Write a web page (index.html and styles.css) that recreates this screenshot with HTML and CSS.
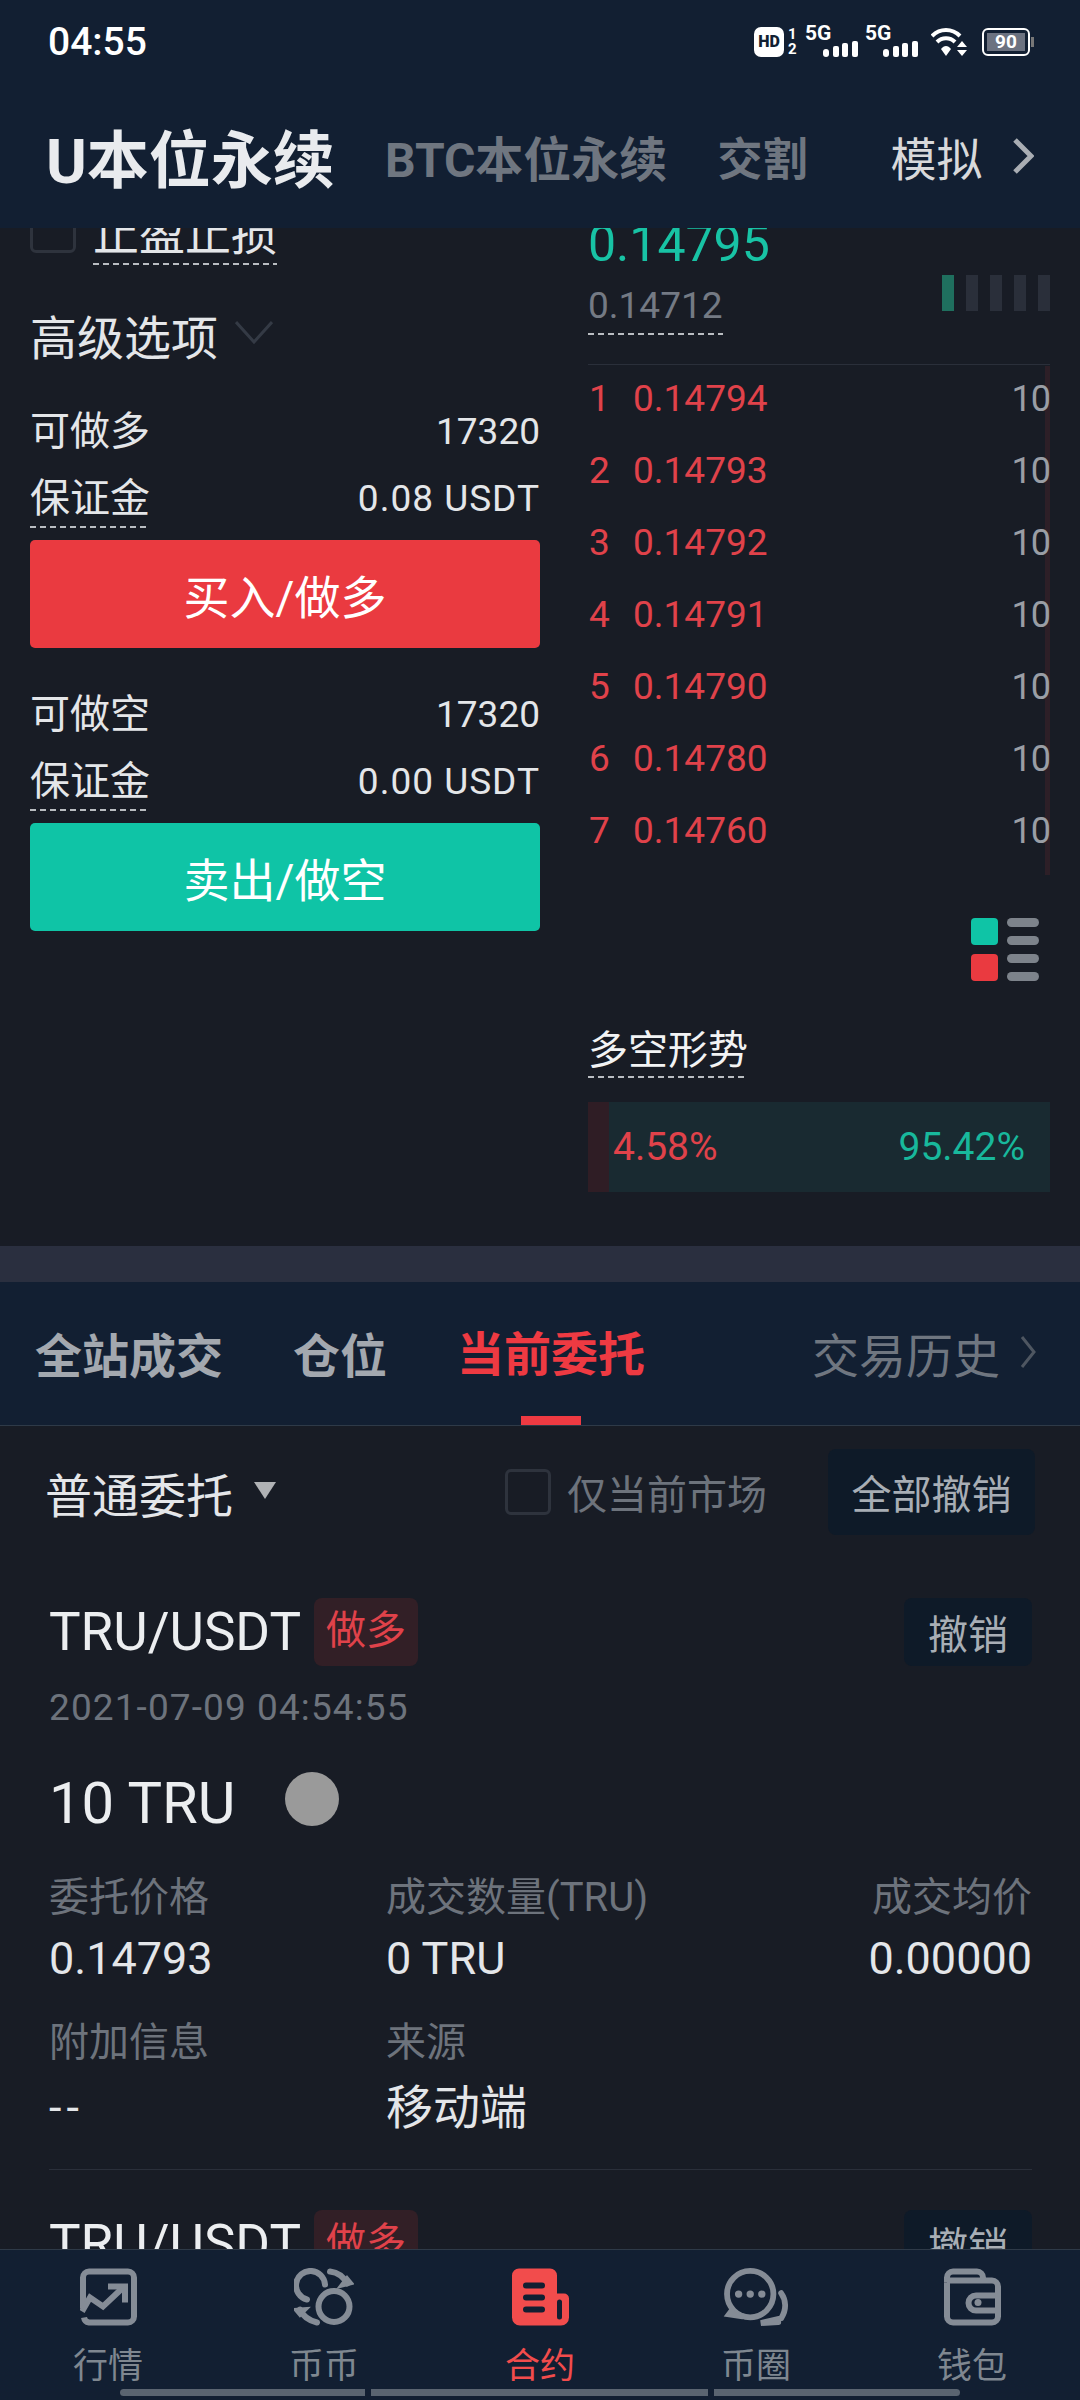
FILE: index.html
```html
<!DOCTYPE html>
<html lang="zh-CN">

<head>
    <meta charset="UTF-8">
    <meta name="viewport" content="width=device-width, initial-scale=1.0">
    <title>U本位永续</title>
    <link rel="stylesheet" href="styles.css">
</head>

<body>
    <header class="top">
        <div class="status">
            <span class="time">04:55</span>
            <div class="status-icons">
                <span class="hd">HD</span>
                <span class="sims"><i>1</i><i>2</i></span>
                <span class="net">
                    <b>5G</b>
                    <svg width="35" height="16" viewBox="0 0 35 16"><rect x="0" y="8" width="6" height="8" rx="3" /><rect x="10" y="5" width="6" height="11" rx="2" /><rect x="19" y="2" width="6" height="14" rx="2" /><rect x="29" y="0" width="6" height="16" rx="2" /></svg>
                </span>
                <span class="net net-2">
                    <b>5G</b>
                    <svg width="35" height="16" viewBox="0 0 35 16"><rect x="0" y="8" width="6" height="8" rx="3" /><rect x="10" y="5" width="6" height="11" rx="2" /><rect x="19" y="2" width="6" height="14" rx="2" /><rect x="29" y="0" width="6" height="16" rx="2" /></svg>
                </span>
                <svg class="wifi" width="36" height="30" viewBox="0 0 36 30">
                    <path d="M1 9 C9 1 21 1 29 9" fill="none" stroke="#fff" stroke-width="4" />
                    <path d="M6 15 C11 10 19 10 24 15" fill="none" stroke="#fff" stroke-width="4" />
                    <path d="M10 22 C13 18 17 18 20 22 L15 29 Z" fill="#fff" />
                    <path d="M31 14 L36 20 H26 Z M26 23 H36 L31 29 Z" fill="#fff" />
                </svg>
                <span class="battery"><span class="battery-level">90</span></span>
            </div>
        </div>
        <nav class="market-tabs">
            <span class="market-main">U本位永续</span>
            <span class="market-sub">BTC本位永续</span>
            <span class="market-sub market-jiaoge">交割</span>
            <span class="market-demo">模拟</span>
            <svg class="market-more" width="22" height="36" viewBox="0 0 22 36"><path d="M3 2 L19 18 L3 34" fill="none" stroke="#a9adb3" stroke-width="5" /></svg>
        </nav>
    </header>

    <main class="scroll">
        <div class="scroll-inner">
            <section class="trade">
                <div class="trade-form">
                    <div class="tp-row">
                        <span class="check"></span>
                        <span class="dash tp-label">止盈止损</span>
                    </div>
                    <div class="adv-row">
                        <span>高级选项</span>
                        <svg width="38" height="24" viewBox="0 0 38 24"><path d="M1 2 L19 22 L37 2" fill="none" stroke="#343a45" stroke-width="3" /></svg>
                    </div>

                    <div class="info-row info-first"><span>可做多</span><span class="num">17320</span></div>
                    <div class="info-row info-margin"><span class="dash">保证金</span><span class="num num-usdt">0.08 USDT</span></div>
                    <button class="trade-btn btn-buy">买入/做多</button>

                    <div class="info-row info-first info-second"><span>可做空</span><span class="num">17320</span></div>
                    <div class="info-row info-margin"><span class="dash">保证金</span><span class="num num-usdt">0.00 USDT</span></div>
                    <button class="trade-btn btn-sell">卖出/做空</button>
                </div>

                <div class="depth">
                    <div class="last-price">0.14795</div>
                    <div class="mark-row">
                        <span class="dash mark-price">0.14712</span>
                        <div class="signal">
                            <i class="on"></i><i></i><i></i><i></i><i></i>
                        </div>
                    </div>
                    <div class="book">
                        <div class="book-bar"></div>
                        <div class="book-row"><span class="book-idx">1</span><span>0.14794</span><span class="book-qty">10</span></div>
                        <div class="book-row"><span class="book-idx">2</span><span>0.14793</span><span class="book-qty">10</span></div>
                        <div class="book-row"><span class="book-idx">3</span><span>0.14792</span><span class="book-qty">10</span></div>
                        <div class="book-row"><span class="book-idx">4</span><span>0.14791</span><span class="book-qty">10</span></div>
                        <div class="book-row"><span class="book-idx">5</span><span>0.14790</span><span class="book-qty">10</span></div>
                        <div class="book-row"><span class="book-idx">6</span><span>0.14780</span><span class="book-qty">10</span></div>
                        <div class="book-row"><span class="book-idx">7</span><span>0.14760</span><span class="book-qty">10</span></div>
                    </div>
                    <svg class="book-mode" width="68" height="63" viewBox="0 0 68 63">
                        <rect x="0" y="0" width="27" height="27" rx="4" fill="#0fc4a6" />
                        <rect x="0" y="36" width="27" height="27" rx="4" fill="#ea3a40" />
                        <rect x="36" y="0" width="32" height="9" rx="4.5" fill="#7d838b" />
                        <rect x="36" y="18" width="32" height="9" rx="4.5" fill="#7d838b" />
                        <rect x="36" y="36" width="32" height="9" rx="4.5" fill="#7d838b" />
                        <rect x="36" y="54" width="32" height="9" rx="4.5" fill="#7d838b" />
                    </svg>
                    <div class="trend-title"><span class="dash">多空形势</span></div>
                    <div class="trend-bar">
                        <div class="trend-long"></div>
                        <span class="trend-red">4.58%</span>
                        <span class="trend-green">95.42%</span>
                    </div>
                </div>
            </section>

            <div class="sep"></div>

            <div class="order-tabs">
                <span class="otab">全站成交</span>
                <span class="otab">仓位</span>
                <span class="otab otab-active">当前委托</span>
                <span class="otab-history">交易历史</span>
                <svg width="16" height="34" viewBox="0 0 16 34"><path d="M2 2 L14 17 L2 32" fill="none" stroke="#4e5661" stroke-width="3" /></svg>
            </div>

            <div class="filter">
                <span class="filter-type">普通委托</span>
                <span class="filter-arrow"></span>
                <span class="check check-market"></span>
                <span class="filter-market">仅当前市场</span>
                <span class="dark-btn cancel-all">全部撤销</span>
            </div>

            <article class="order">
                <div class="order-head">
                    <span class="pair">TRU/USDT</span>
                    <span class="side">做多</span>
                    <span class="dark-btn cancel">撤销</span>
                </div>
                <div class="order-date">2021-07-09 04:54:55</div>
                <div class="order-size"><span>10 TRU</span><i class="dot"></i></div>
                <div class="order-grid">
                    <div>
                        <div class="lbl">委托价格</div>
                        <div class="val">0.14793</div>
                    </div>
                    <div>
                        <div class="lbl">成交数量(TRU)</div>
                        <div class="val">0 TRU</div>
                    </div>
                    <div class="right">
                        <div class="lbl">成交均价</div>
                        <div class="val">0.00000</div>
                    </div>
                    <div>
                        <div class="lbl">附加信息</div>
                        <div class="val val-2 val-dash">--</div>
                    </div>
                    <div>
                        <div class="lbl">来源</div>
                        <div class="val val-2 val-cn">移动端</div>
                    </div>
                </div>
            </article>

            <article class="order order-next">
                <div class="order-head">
                    <span class="pair">TRU/USDT</span>
                    <span class="side">做多</span>
                    <span class="dark-btn cancel">撤销</span>
                </div>
            </article>
        </div>
    </main>

    <footer class="tabbar">
        <div class="tab">
            <svg width="57" height="57" viewBox="0 0 57 57" fill="none" stroke="#858c96" stroke-width="6">
                <path d="M3 40 V9 a6 6 0 0 1 6 -6 H48 a6 6 0 0 1 6 6 V48 a6 6 0 0 1 -6 6 H9 a6 6 0 0 1 -5 -5" />
                <path d="M2 43 L10 29 L23 38 L42 20" />
                <path d="M28 18 H45 V34" />
            </svg>
            <span>行情</span>
        </div>
        <div class="tab">
            <svg width="60" height="57" viewBox="0 0 60 57" fill="none" stroke="#858c96" stroke-width="6" stroke-linecap="round">
                <circle cx="40" cy="38" r="15.500" />
                <path d="M31 16 A14.500 14.500 0 1 0 13 31" />
                <path d="M36 3 C44 4 50 9 53 15" />
                <path d="M46 18 L58 15 L53 9 Z" stroke-width="3" fill="#858c96" stroke-linecap="butt" />
                <path d="M23 54 C15 52 9 48 6 41" />
                <path d="M13 40 L1 41 L6 47 Z" stroke-width="3" fill="#858c96" stroke-linecap="butt" />
            </svg>
            <span>币币</span>
        </div>
        <div class="tab tab-active">
            <svg width="57" height="57" viewBox="0 0 57 57">
                <path d="M7 0 H38 a7 7 0 0 1 7 7 V25 H52 a5 5 0 0 1 5 5 V49 a8 8 0 0 1 -8 8 H8 a8 8 0 0 1 -8 -8 V7 a7 7 0 0 1 7 -7 Z" fill="#f24c4c" />
                <rect x="11" y="14" width="22" height="6" rx="3" fill="#121f32" />
                <rect x="11" y="26" width="22" height="6" rx="3" fill="#121f32" />
                <rect x="11" y="38" width="22" height="6" rx="3" fill="#121f32" />
                <rect x="45" y="31" width="5" height="20" rx="2.500" fill="#121f32" />
            </svg>
            <span>合约</span>
        </div>
        <div class="tab">
            <svg width="67" height="60" viewBox="0 0 67 60" fill="none" stroke="#858c96" stroke-width="6" stroke-linecap="round">
                <circle cx="27" cy="27" r="24" />
                <path d="M8 44 L5 48 L19 50" />
                <path d="M59 26 C64 33 65 43 59 52 L38 57 L56 56" />
                <g fill="#858c96" stroke="none">
                    <circle cx="15" cy="27" r="3.800" />
                    <circle cx="27" cy="27" r="3.800" />
                    <circle cx="39" cy="27" r="3.800" />
                </g>
            </svg>
            <span>币圈</span>
        </div>
        <div class="tab">
            <svg width="57" height="57" viewBox="0 0 57 57" fill="none" stroke="#858c96" stroke-width="6">
                <path d="M3 14 V48 a6 6 0 0 0 6 6 H48 a6 6 0 0 0 6 -6 V18 a6 6 0 0 0 -6 -6 H3" />
                <path d="M3 14 V9 a6 6 0 0 1 6 -6 H33 a6 6 0 0 1 6 6 V12" />
                <path d="M54 27 H32 a7.500 7.500 0 0 0 0 15 H54" />
                <circle cx="34" cy="34" r="3.500" fill="#858c96" stroke="none" />
            </svg>
            <span>钱包</span>
        </div>
        <div class="gesture">
            <i class="g1"></i><i class="g2"></i><i class="g3"></i>
        </div>
    </footer>
</body>

</html>
```

FILE: styles.css
```css
* {
    box-sizing: border-box;
}

html,
body {
    margin: 0;
    padding: 0;
}

body {
    width: 1080px;
    height: 2400px;
    display: flex;
    flex-direction: column;
    overflow: hidden;
    background: #181c25;
    color: #e4e6e9;
    font-family: Roboto, "Noto Sans CJK SC", sans-serif;
}

i {
    display: block;
}

/* header */
.top {
    height: 228px;
    flex: none;
    background: #121f32;
}

.status {
    height: 84px;
    padding: 0 50px 0 48px;
    display: flex;
    align-items: center;
    justify-content: space-between;
    color: #fff;
}

.time {
    font-size: 39px;
    font-weight: 500;
}

.status-icons {
    display: flex;
    align-items: center;
    height: 30px;
}

.hd {
    width: 30px;
    height: 30px;
    border-radius: 7px;
    background: #fff;
    color: #121f32;
    font-size: 16px;
    font-weight: 900;
    line-height: 30px;
    text-align: center;
}

.sims {
    width: 10px;
    margin-left: 4px;
    font-size: 15px;
    font-weight: 700;
    line-height: 15px;
}

.sims i {
    font-style: normal;
}

.net {
    position: relative;
    width: 47px;
    height: 30px;
    margin-left: 13px;
}

.net-2 {
    margin-left: 13px;
}

.net b {
    position: absolute;
    left: -6px;
    top: -4px;
    font-size: 21px;
    line-height: 20px;
}

.net svg {
    position: absolute;
    right: 0;
    bottom: 0;
    fill: #fff;
}

.wifi {
    margin-left: 13px;
}

.battery {
    position: relative;
    width: 48px;
    height: 28px;
    margin-left: 15px;
    padding: 3px;
    border: 2px solid #fff;
    border-radius: 6px;
}

.battery::after {
    content: "";
    position: absolute;
    right: -6px;
    top: 7px;
    width: 3px;
    height: 10px;
    background: #777;
}

.battery-level {
    display: block;
    height: 18px;
    background: #6c7280;
    color: #fff;
    font-size: 19px;
    font-weight: 700;
    line-height: 18px;
    text-align: center;
}

.market-tabs {
    display: flex;
    align-items: center;
    height: 144px;
    padding: 0 0 0 46px;
    white-space: nowrap;
}

.market-tabs > * {
    flex: none;
}

.market-main {
    font-size: 62px;
    font-weight: 700;
    color: #e9ebee;
}

.market-sub {
    margin-left: 50px;
    font-size: 48px;
    font-weight: 700;
    color: #6f7680;
}

.market-jiaoge {
    font-size: 45px;
}

.market-demo {
    margin-left: 83px;
    font-size: 46px;
    color: #d8d9db;
}

.market-more {
    margin-left: 30px;
}

/* scrolled content */
.scroll {
    flex: 1;
    overflow: hidden;
}

.scroll-inner {
    margin-top: -24px;
}

.dash {
    display: inline-block;
    background: repeating-linear-gradient(90deg, #b9bcc1 0 6px, transparent 6px 10px) left bottom / 100% 2px no-repeat;
}

.trade {
    display: flex;
    align-items: flex-start;
    height: 1042px;
}

.trade-form {
    width: 510px;
    margin-left: 30px;
}

.check {
    flex: none;
    display: block;
    width: 46px;
    height: 46px;
    border: 3px solid #2e333d;
    border-radius: 6px;
}

.tp-row {
    display: flex;
    align-items: flex-start;
    height: 60px;
    padding-top: 3px;
}

.tp-label {
    margin-left: 17px;
    height: 58px;
    font-size: 46px;
    line-height: 54px;
}

.adv-row {
    display: flex;
    align-items: center;
    height: 56px;
    margin-top: 42px;
    font-size: 47px;
}

.adv-row svg {
    margin-left: 17px;
    margin-top: -4px;
}

.info-row {
    display: flex;
    justify-content: space-between;
    align-items: flex-start;
    font-size: 40px;
    line-height: 50px;
}

.info-first {
    margin-top: 45px;
    height: 50px;
}

.info-second {
    margin-top: 42px;
}

.info-margin {
    height: 54px;
    margin-top: 17px;
}

.info-margin .dash {
    height: 54px;
}

.num {
    font-size: 37px;
}

.num-usdt {
    letter-spacing: 1px;
}

.trade-btn {
    display: block;
    width: 100%;
    height: 108px;
    margin-top: 12px;
    border: none;
    border-radius: 5px;
    color: #fff;
    font-family: inherit;
    font-size: 46px;
}

.btn-buy {
    background: #ea3a40;
}

.btn-sell {
    background: #0fc4a6;
}

.depth {
    width: 462px;
    margin-left: 48px;
}

.last-price {
    padding-top: 12px;
    height: 68px;
    font-size: 50px;
    line-height: 56px;
    color: #18c3a5;
}

.mark-row {
    display: flex;
    justify-content: space-between;
    align-items: flex-start;
    margin-top: 3px;
    height: 60px;
}

.mark-price {
    height: 60px;
    font-size: 37px;
    line-height: 62px;
    color: #747a84;
}

.signal {
    display: flex;
    gap: 12px;
}

.signal i {
    width: 12px;
    height: 36px;
    background: #2a2f3a;
}

.signal .on {
    background: #1f6f5e;
}

.book {
    position: relative;
    display: flex;
    flex-direction: column;
    gap: 14px;
    margin-top: 29px;
    padding: 5px 0 15px;
    border-top: 1px solid #2a2f3a;
}

.book-bar {
    position: absolute;
    right: 0;
    top: 1px;
    bottom: 0;
    width: 5px;
    background: #2d1f27;
}

.book-row {
    position: relative;
    display: flex;
    height: 58px;
    font-size: 37px;
    line-height: 58px;
    color: #e0424a;
}

.book-idx {
    width: 45px;
    padding-left: 1px;
}

.book-qty {
    margin-left: auto;
    letter-spacing: -1px;
    font-size: 36px;
    color: #9a9ea5;
}

.book-mode {
    display: block;
    margin: 43px 0 0 383px;
}

.trend-title {
    margin-top: 45px;
    height: 52px;
    font-size: 40px;
    line-height: 50px;
    color: #f2f3f4;
}

.trend-title .dash {
    height: 52px;
}

.trend-bar {
    position: relative;
    display: flex;
    justify-content: space-between;
    align-items: center;
    height: 90px;
    margin-top: 24px;
    padding: 0 25px;
    background: #192a31;
    font-size: 39px;
}

.trend-long {
    position: absolute;
    left: 0;
    top: 0;
    bottom: 0;
    width: 21px;
    background: #2f1d25;
}

.trend-red {
    color: #e0424a;
}

.trend-green {
    color: #18b89c;
}

.sep {
    height: 36px;
    background: #2a2f3f;
}

/* order tabs */
.order-tabs {
    display: flex;
    align-items: center;
    gap: 70px;
    height: 144px;
    padding: 0 44px 3px 35px;
    background: #121f32;
    border-bottom: 1px solid #2e3a48;
}

.otab {
    position: relative;
    font-size: 47px;
    font-weight: 700;
    color: #a3a8af;
}

.otab-active {
    height: 144px;
    line-height: 150px;
    color: #ee3a42;
}

.otab-active::after {
    content: "";
    position: absolute;
    left: 64px;
    bottom: -1px;
    width: 60px;
    height: 9px;
    background: #ee3a42;
}

.otab-history {
    margin-left: auto;
    margin-right: -50px;
    font-size: 47px;
    color: #6f7680;
}

.filter {
    display: flex;
    align-items: center;
    height: 109px;
    padding: 23px 45px 0 45px;
}

.filter-type {
    font-size: 47px;
    color: #e4e6e9;
}

.filter-arrow {
    width: 0;
    height: 0;
    margin-left: 21px;
    margin-top: -4px;
    border-left: 11px solid transparent;
    border-right: 11px solid transparent;
    border-top: 17px solid #b0b2b5;
}

.check-market {
    margin-left: 229px;
}

.filter-market {
    margin-left: 16px;
    font-size: 40px;
    color: #6d737c;
}

.dark-btn {
    display: flex;
    align-items: center;
    justify-content: center;
    margin-left: auto;
    border-radius: 8px;
    background: #0e1a28;
    color: #a8aeb5;
    font-size: 40px;
}

.cancel-all {
    width: 207px;
    height: 86px;
}

/* order list */
.order {
    margin-top: 63px;
    padding: 0 48px 0 49px;
}

.order-head {
    display: flex;
    align-items: center;
    height: 68px;
}

.pair {
    font-size: 53px;
    color: #eceef0;
}

.side {
    width: 104px;
    height: 68px;
    margin-left: 13px;
    border-radius: 8px;
    background: #321f26;
    color: #e0424a;
    font-size: 40px;
    line-height: 66px;
    text-align: center;
}

.cancel {
    width: 128px;
    height: 68px;
}

.order-date {
    margin-top: 20px;
    font-size: 37px;
    letter-spacing: 1.1px;
    line-height: 44px;
    color: #6d737c;
}

.order-size {
    display: flex;
    align-items: center;
    height: 64px;
    margin-top: 41px;
    font-size: 58px;
    color: #eceef0;
}

.dot {
    width: 54px;
    height: 54px;
    margin-left: 50px;
    margin-top: -8px;
    border-radius: 50%;
    background: #9a9a9a;
}

.order-grid {
    display: grid;
    grid-template-columns: 337px 1fr auto;
    row-gap: 31px;
    margin-top: 38px;
    padding-bottom: 33px;
    border-bottom: 1px solid #2a2f3a;
}

.right {
    text-align: right;
}

.lbl {
    font-size: 40px;
    line-height: 50px;
    color: #6d737c;
}

.val {
    margin-top: 8px;
    font-size: 45px;
    line-height: 56px;
    color: #e4e6e9;
}

.val-2 {
    margin-top: 12px;
}

.val-dash {
    letter-spacing: 5px;
}

.val-cn {
    font-size: 47px;
}

.order-next {
    margin-top: 40px;
}

/* bottom bar */
.tabbar {
    position: relative;
    flex: none;
    display: flex;
    height: 151px;
    padding-top: 18px;
    background: #121f32;
    border-top: 1px solid #2e3a48;
}

.tab {
    display: flex;
    flex-direction: column;
    align-items: center;
    width: 216px;
    color: #7f8790;
    font-size: 35px;
}

.tab svg {
    height: 58px;
    margin-bottom: 11px;
}

.tab-active {
    color: #f24c4c;
}

.gesture {
    position: absolute;
    left: 120px;
    bottom: 4px;
    display: flex;
    gap: 6px;
}

.gesture i {
    height: 7px;
    background: #5a6470;
}

.g1 {
    width: 245px;
    border-radius: 4px 0 0 4px;
}

.g2 {
    width: 337px;
}

.g3 {
    width: 246px;
    border-radius: 0 4px 4px 0;
}
```
